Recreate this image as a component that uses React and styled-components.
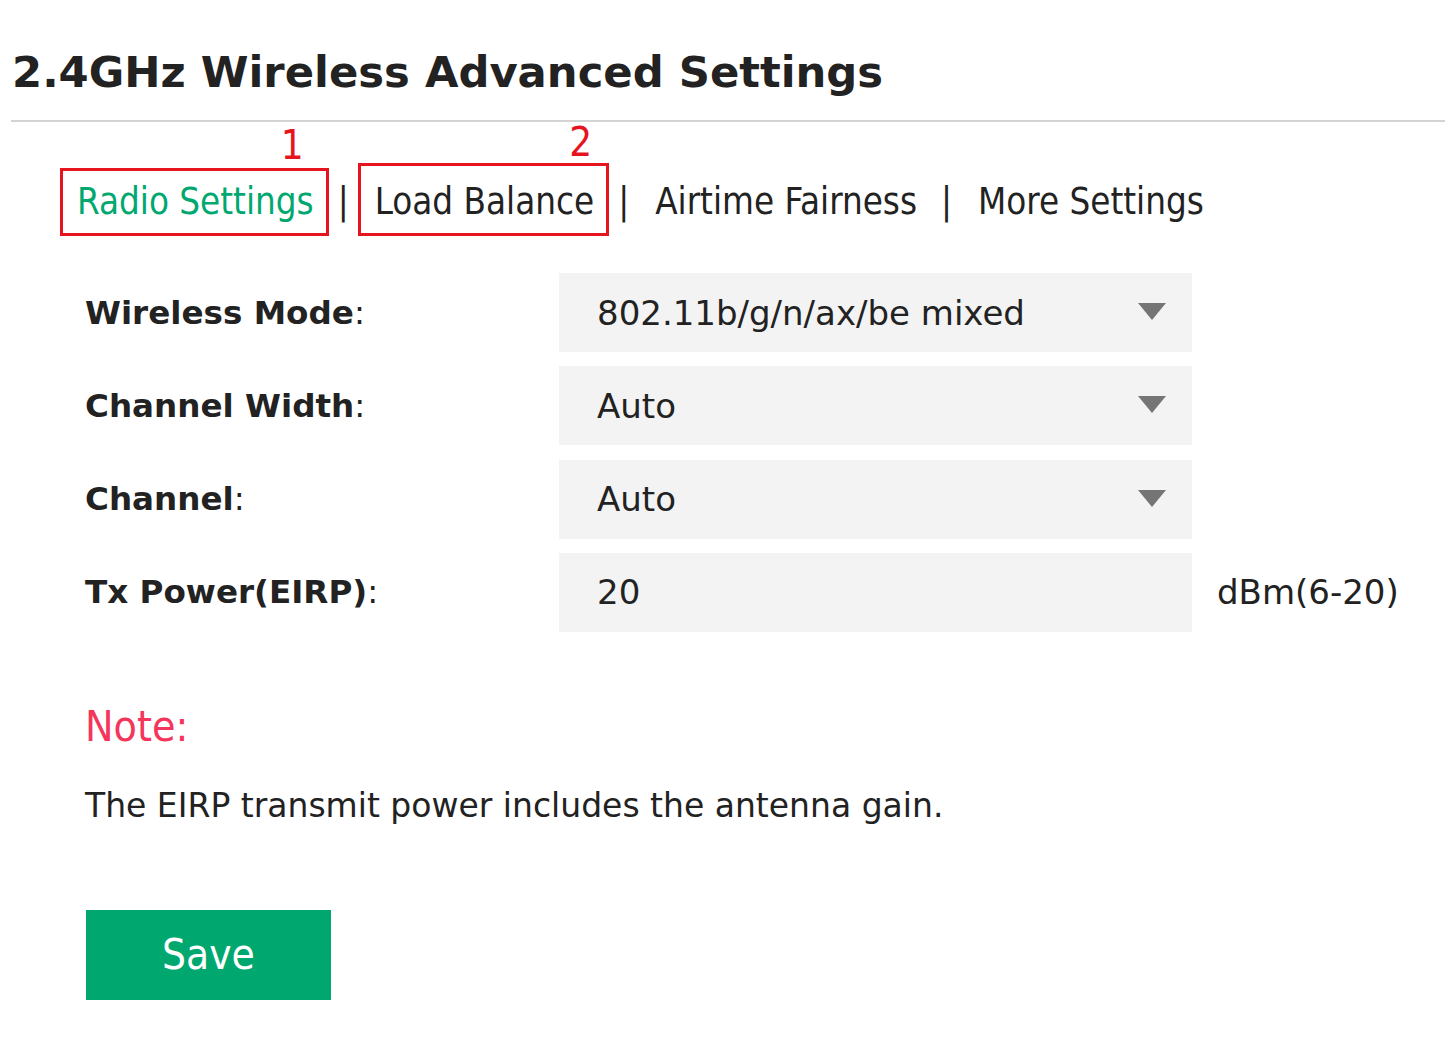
import React from "react";
import styled, { createGlobalStyle } from "styled-components";

const GlobalStyle = createGlobalStyle`
  html, body { margin: 0; padding: 0; background: #ffffff; }
  body { font-family: "DejaVu Sans Condensed", "DejaVu Sans", sans-serif; color: #222; }
`;

const Page = styled.div`
  width: 1445px;
  min-height: 1037px;
  box-sizing: border-box;
  padding-top: 44px;
`;

const Title = styled.h1`
  margin: 0 0 0 12px;
  font-family: "DejaVu Sans", sans-serif;
  font-weight: bold;
  font-size: 43.3px;
  line-height: 56px;
  color: #222;
`;

const Divider = styled.hr`
  margin: 20px 0 0 11px;
  border: none;
  height: 2px;
  background: #d3d3d3;
`;

const TabBar = styled.nav`
  display: flex;
  align-items: flex-end;
  margin: 41px 0 0 60px;
  font-size: 36.4px;
`;

const Tab = styled.div`
  position: relative;
  box-sizing: border-box;
  padding: ${(p) => p.$padTop}px 12px 12px 14px;
  border: 3px solid ${(p) => (p.$marked ? "#e6141f" : "transparent")};
  color: ${(p) => (p.$active ? "#00a870" : "#222")};
  line-height: 38px;
  white-space: nowrap;
`;

const Marker = styled.span`
  position: absolute;
  right: ${(p) => p.$right}px;
  bottom: calc(100% + ${(p) => p.$lift}px);
  color: #e6141f;
  font-size: 40px;
  line-height: 1;
`;

const Sep = styled.span`
  margin: 0 9px 15px;
  line-height: 38px;
  color: #222;
`;

const Form = styled.div`
  display: grid;
  grid-template-columns: 474px 633px auto;
  row-gap: 14.33px;
  margin: 37px 0 0 85px;
  align-items: center;
`;

const Label = styled.div`
  font-family: "DejaVu Sans", sans-serif;
  font-size: 32.6px;
  color: #222;
  white-space: nowrap;
  b { font-weight: bold; }
`;

const Field = styled.div`
  height: 79px;
  box-sizing: border-box;
  background: #f3f3f3;
  display: flex;
  align-items: center;
  justify-content: space-between;
  padding: 0 26px 0 38px;
  font-family: "DejaVu Sans", sans-serif;
  font-size: 34px;
  color: #222;
`;

const Arrow = styled.svg`
  width: 28px;
  height: 17px;
  margin-top: -2px;
`;

const Unit = styled.div`
  padding-left: 25px;
  font-family: "DejaVu Sans", sans-serif;
  font-size: 34px;
  color: #222;
  white-space: nowrap;
`;

const Note = styled.div`
  margin: 70px 0 0 85px;
  color: #f5365c;
  font-size: 42.5px;
  line-height: 50px;
`;

const Desc = styled.p`
  margin: 34px 0 0 85px;
  font-family: "DejaVu Sans", sans-serif;
  font-size: 33px;
  line-height: 40px;
  color: #222;
`;

const SaveButton = styled.button`
  display: block;
  margin: 84px 0 0 86px;
  width: 245px;
  height: 90px;
  border: none;
  background: #00a870;
  color: #ffffff;
  font-family: "DejaVu Sans Condensed", "DejaVu Sans", sans-serif;
  font-size: 42px;
  padding: 0;
`;

const DropArrow = () => (
  <Arrow viewBox="0 0 28 17">
    <path d="M0 0 H28 L14 17 Z" fill="#757575" />
  </Arrow>
);

const rows = [
  { label: "Wireless Mode", value: "802.11b/g/n/ax/be mixed", select: true },
  { label: "Channel Width", value: "Auto", select: true },
  { label: "Channel", value: "Auto", select: true },
  { label: "Tx Power(EIRP)", value: "20", select: false, unit: "dBm(6-20)" },
];

export default function App() {
  return (
    <>
      <GlobalStyle />
      <Page>
        <Title>2.4GHz Wireless Advanced Settings</Title>
        <Divider />
        <TabBar>
          <Tab $marked $active $padTop={12}>
            Radio Settings
            <Marker $right={22} $lift={6}>1</Marker>
          </Tab>
          <Sep>|</Sep>
          <Tab $marked $padTop={17}>
            Load Balance
            <Marker $right={14} $lift={4}>2</Marker>
          </Tab>
          <Sep>|</Sep>
          <Tab $padTop={12}>Airtime Fairness</Tab>
          <Sep>|</Sep>
          <Tab $padTop={12}>More Settings</Tab>
        </TabBar>
        <Form>
          {rows.map((r) => (
            <React.Fragment key={r.label}>
              <Label>
                <b>{r.label}</b>:
              </Label>
              <Field>
                <span>{r.value}</span>
                {r.select && <DropArrow />}
              </Field>
              <Unit>{r.unit || ""}</Unit>
            </React.Fragment>
          ))}
        </Form>
        <Note>Note:</Note>
        <Desc>The EIRP transmit power includes the antenna gain.</Desc>
        <SaveButton>Save</SaveButton>
      </Page>
    </>
  );
}
